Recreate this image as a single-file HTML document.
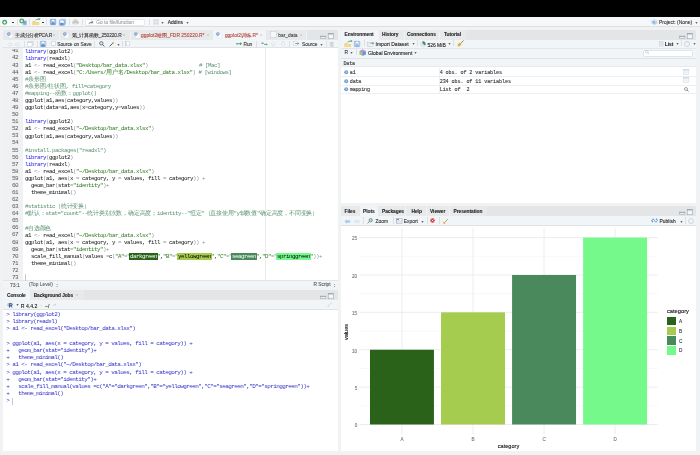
<!DOCTYPE html><html><head><meta charset="utf-8"><style>
*{box-sizing:border-box}
html,body{margin:0;padding:0}
body{width:700px;height:455px;overflow:hidden;position:relative;background:#f0f2f4;font-family:"Liberation Sans",sans-serif;color:#333}
.a{position:absolute}
.t{position:absolute;white-space:pre;line-height:1}
.mono{font-family:"Liberation Mono",monospace;-webkit-text-stroke:0}
.t{-webkit-text-stroke:0.1px currentColor}
.t.mono{-webkit-text-stroke:0}
i.w{font-style:normal;display:inline-block;width:5.8px;text-align:center;letter-spacing:0;font-size:6.3px}
.hl{padding:0 1px;margin:0 -1px}
.sep{position:absolute;width:0.6px;background:#dcdfe3}
.arr{position:absolute;width:0;height:0;border-left:1.3px solid transparent;border-right:1.3px solid transparent;border-top:1.5px solid #222}
svg{position:absolute;overflow:visible}
</style></head><body><div id="root" style="position:absolute;left:0;top:0;width:700px;height:455px;will-change:transform"><div class="a" style="left:0.00px;top:0.00px;width:700.00px;height:17.00px;background:#000"></div><div class="a" style="left:0.00px;top:17.00px;width:700.00px;height:9.60px;background:#f6f7f9;border-bottom:0.6px solid #dde0e3"></div><div class="a" style="left:3.40px;top:30.30px;width:334.40px;height:9.30px;background:#e3e5e7;border-radius:2px 2px 0 0"></div><div class="a" style="left:3.40px;top:30.30px;width:303.00px;height:9.30px;background:#e8e9eb;border-radius:2px 0 0 0"></div><div class="a" style="left:3.40px;top:39.60px;width:334.40px;height:8.20px;background:#f2f5f7;border-bottom:0.6px solid #e0e3e6"></div><div class="a" style="left:3.40px;top:47.80px;width:334.40px;height:232.50px;background:#fff"></div><div class="a" style="left:3.40px;top:47.80px;width:19.80px;height:232.50px;background:#f0f1f3"></div><div class="a" style="left:265.00px;top:47.80px;width:0.60px;height:232.50px;background:#ececec"></div><div class="a" style="left:3.40px;top:280.30px;width:334.40px;height:7.00px;background:#f2f5f7;border-top:0.6px solid #e3e6e9"></div><div class="a" style="left:3.40px;top:290.40px;width:334.40px;height:9.30px;background:#e3e5e7;border-radius:2px 2px 0 0"></div><div class="a" style="left:3.40px;top:290.40px;width:80.50px;height:9.30px;background:#e8e9eb;border-radius:2px 0 0 0"></div><div class="a" style="left:3.40px;top:299.70px;width:334.40px;height:9.90px;background:#f2f5f7;border-bottom:0.6px solid #e0e3e6"></div><div class="a" style="left:3.40px;top:309.60px;width:334.40px;height:141.40px;background:#fff"></div><div class="a" style="left:340.60px;top:30.40px;width:355.80px;height:9.20px;background:#e3e5e7;border-radius:2px 2px 0 0"></div><div class="a" style="left:340.60px;top:30.40px;width:125.50px;height:9.20px;background:#e8e9eb;border-radius:2px 0 0 0"></div><div class="a" style="left:340.60px;top:39.80px;width:355.80px;height:18.50px;background:#f2f5f7"></div><div class="a" style="left:340.60px;top:48.20px;width:355.80px;height:0.50px;background:#e3e6e9"></div><div class="a" style="left:340.60px;top:58.30px;width:355.80px;height:145.00px;background:#fff"></div><div class="a" style="left:340.60px;top:58.30px;width:355.80px;height:9.20px;background:#f2f5f7;border-top:0.6px solid #e0e3e6;border-bottom:0.5px solid #e8ebee"></div><div class="a" style="left:340.60px;top:205.90px;width:355.80px;height:9.80px;background:#e3e5e7;border-radius:2px 2px 0 0"></div><div class="a" style="left:340.60px;top:205.90px;width:146.40px;height:9.80px;background:#e8e9eb;border-radius:2px 0 0 0"></div><div class="a" style="left:340.60px;top:215.70px;width:355.80px;height:9.90px;background:#f2f5f7;border-bottom:0.6px solid #e0e3e6"></div><div class="a" style="left:340.60px;top:225.60px;width:355.80px;height:225.40px;background:#fff"></div><div class="a" style="left:3.4px;top:48.5px;width:334px;height:231.8px;overflow:hidden"><div class="t mono" style="left:0px;top:-0.09px;font-size:6.0px;letter-spacing:-0.45px;color:#5a5a5a;width:14.8px;text-align:right">41</div><div class="t mono" style="left:21.70px;top:0.11px;font-size:5.80px;letter-spacing:-0.48px;color:#111"><span style="color:#2020e8">library</span><span style="color:#8a96a5">(</span>ggplot2<span style="color:#8a96a5">)</span></div><div class="t mono" style="left:0px;top:6.99px;font-size:6.0px;letter-spacing:-0.45px;color:#5a5a5a;width:14.8px;text-align:right">42</div><div class="t mono" style="left:21.70px;top:7.19px;font-size:5.80px;letter-spacing:-0.48px;color:#111"><span style="color:#2020e8">library</span><span style="color:#8a96a5">(</span>readxl<span style="color:#8a96a5">)</span></div><div class="t mono" style="left:0px;top:14.07px;font-size:6.0px;letter-spacing:-0.45px;color:#5a5a5a;width:14.8px;text-align:right">43</div><div class="t mono" style="left:21.70px;top:14.27px;font-size:5.80px;letter-spacing:-0.48px;color:#111">a1 <span style="color:#8a96a5">&lt;-</span> read_excel<span style="color:#8a96a5">(</span><span style="color:#2d781d">"Desktop/bar_data.xlsx"</span><span style="color:#8a96a5">)</span>                 <span style="color:#5a9070"># [Mac]</span></div><div class="t mono" style="left:0px;top:21.15px;font-size:6.0px;letter-spacing:-0.45px;color:#5a5a5a;width:14.8px;text-align:right">44</div><div class="t mono" style="left:21.70px;top:21.35px;font-size:5.80px;letter-spacing:-0.48px;color:#111">a1 <span style="color:#8a96a5">&lt;-</span> read_excel<span style="color:#8a96a5">(</span><span style="color:#2d781d">"C:/Users/<i class="w">用</i><i class="w">户</i><i class="w">名</i>/Desktop/bar_data.xlsx"</span><span style="color:#8a96a5">)</span> <span style="color:#5a9070"># [windows]</span></div><div class="t mono" style="left:0px;top:28.23px;font-size:6.0px;letter-spacing:-0.45px;color:#5a5a5a;width:14.8px;text-align:right">45</div><div class="t mono" style="left:21.70px;top:28.43px;font-size:5.80px;letter-spacing:-0.48px;color:#111"><span style="color:#5a9070">#<i class="w">条</i><i class="w">形</i><i class="w">图</i></span></div><div class="t mono" style="left:0px;top:35.31px;font-size:6.0px;letter-spacing:-0.45px;color:#5a5a5a;width:14.8px;text-align:right">46</div><div class="t mono" style="left:21.70px;top:35.51px;font-size:5.80px;letter-spacing:-0.48px;color:#111"><span style="color:#5a9070">#<i class="w">条</i><i class="w">形</i><i class="w">图</i>/<i class="w">柱</i><i class="w">状</i><i class="w">图</i>, fill=category</span></div><div class="t mono" style="left:0px;top:42.39px;font-size:6.0px;letter-spacing:-0.45px;color:#5a5a5a;width:14.8px;text-align:right">47</div><div class="t mono" style="left:21.70px;top:42.59px;font-size:5.80px;letter-spacing:-0.48px;color:#111"><span style="color:#5a9070">#mapping--<i class="w">函</i><i class="w">数</i><i class="w">：</i>ggplot()</span></div><div class="t mono" style="left:0px;top:49.47px;font-size:6.0px;letter-spacing:-0.45px;color:#5a5a5a;width:14.8px;text-align:right">48</div><div class="t mono" style="left:21.70px;top:49.67px;font-size:5.80px;letter-spacing:-0.48px;color:#111">ggplot<span style="color:#8a96a5">(</span>a1,aes<span style="color:#8a96a5">(</span>category,values<span style="color:#8a96a5">)</span><span style="color:#8a96a5">)</span></div><div class="t mono" style="left:0px;top:56.55px;font-size:6.0px;letter-spacing:-0.45px;color:#5a5a5a;width:14.8px;text-align:right">49</div><div class="t mono" style="left:21.70px;top:56.75px;font-size:5.80px;letter-spacing:-0.48px;color:#111">ggplot<span style="color:#8a96a5">(</span>data<span style="color:#8a96a5">=</span>a1,aes<span style="color:#8a96a5">(</span>x<span style="color:#8a96a5">=</span>category,y<span style="color:#8a96a5">=</span>values<span style="color:#8a96a5">)</span><span style="color:#8a96a5">)</span></div><div class="t mono" style="left:0px;top:63.63px;font-size:6.0px;letter-spacing:-0.45px;color:#5a5a5a;width:14.8px;text-align:right">50</div><div class="t mono" style="left:21.70px;top:63.83px;font-size:5.80px;letter-spacing:-0.48px;color:#111"></div><div class="t mono" style="left:0px;top:70.71px;font-size:6.0px;letter-spacing:-0.45px;color:#5a5a5a;width:14.8px;text-align:right">51</div><div class="t mono" style="left:21.70px;top:70.91px;font-size:5.80px;letter-spacing:-0.48px;color:#111"><span style="color:#2020e8">library</span><span style="color:#8a96a5">(</span>ggplot2<span style="color:#8a96a5">)</span></div><div class="t mono" style="left:0px;top:77.79px;font-size:6.0px;letter-spacing:-0.45px;color:#5a5a5a;width:14.8px;text-align:right">52</div><div class="t mono" style="left:21.70px;top:77.99px;font-size:5.80px;letter-spacing:-0.48px;color:#111">a1 <span style="color:#8a96a5">&lt;-</span> read_excel<span style="color:#8a96a5">(</span><span style="color:#2d781d">"~/Desktop/bar_data.xlsx"</span><span style="color:#8a96a5">)</span></div><div class="t mono" style="left:0px;top:84.87px;font-size:6.0px;letter-spacing:-0.45px;color:#5a5a5a;width:14.8px;text-align:right">53</div><div class="t mono" style="left:21.70px;top:85.07px;font-size:5.80px;letter-spacing:-0.48px;color:#111">ggplot<span style="color:#8a96a5">(</span>a1,aes<span style="color:#8a96a5">(</span>category,values<span style="color:#8a96a5">)</span><span style="color:#8a96a5">)</span></div><div class="t mono" style="left:0px;top:91.95px;font-size:6.0px;letter-spacing:-0.45px;color:#5a5a5a;width:14.8px;text-align:right">54</div><div class="t mono" style="left:21.70px;top:92.15px;font-size:5.80px;letter-spacing:-0.48px;color:#111"></div><div class="t mono" style="left:0px;top:99.03px;font-size:6.0px;letter-spacing:-0.45px;color:#5a5a5a;width:14.8px;text-align:right">55</div><div class="t mono" style="left:21.70px;top:99.23px;font-size:5.80px;letter-spacing:-0.48px;color:#111"><span style="color:#5a9070">#install.packages("readxl")</span></div><div class="t mono" style="left:0px;top:106.11px;font-size:6.0px;letter-spacing:-0.45px;color:#5a5a5a;width:14.8px;text-align:right">56</div><div class="t mono" style="left:21.70px;top:106.31px;font-size:5.80px;letter-spacing:-0.48px;color:#111"><span style="color:#2020e8">library</span><span style="color:#8a96a5">(</span>ggplot2<span style="color:#8a96a5">)</span></div><div class="t mono" style="left:0px;top:113.19px;font-size:6.0px;letter-spacing:-0.45px;color:#5a5a5a;width:14.8px;text-align:right">57</div><div class="t mono" style="left:21.70px;top:113.39px;font-size:5.80px;letter-spacing:-0.48px;color:#111"><span style="color:#2020e8">library</span><span style="color:#8a96a5">(</span>readxl<span style="color:#8a96a5">)</span></div><div class="t mono" style="left:0px;top:120.27px;font-size:6.0px;letter-spacing:-0.45px;color:#5a5a5a;width:14.8px;text-align:right">58</div><div class="t mono" style="left:21.70px;top:120.47px;font-size:5.80px;letter-spacing:-0.48px;color:#111">a1 <span style="color:#8a96a5">&lt;-</span> read_excel<span style="color:#8a96a5">(</span><span style="color:#2d781d">"~/Desktop/bar_data.xlsx"</span><span style="color:#8a96a5">)</span></div><div class="t mono" style="left:0px;top:127.35px;font-size:6.0px;letter-spacing:-0.45px;color:#5a5a5a;width:14.8px;text-align:right">59</div><div class="t mono" style="left:21.70px;top:127.55px;font-size:5.80px;letter-spacing:-0.48px;color:#111">ggplot<span style="color:#8a96a5">(</span>a1, aes<span style="color:#8a96a5">(</span>x <span style="color:#8a96a5">=</span> category, y <span style="color:#8a96a5">=</span> values, fill <span style="color:#8a96a5">=</span> category<span style="color:#8a96a5">)</span><span style="color:#8a96a5">)</span> <span style="color:#8a96a5">+</span></div><div class="t mono" style="left:0px;top:134.43px;font-size:6.0px;letter-spacing:-0.45px;color:#5a5a5a;width:14.8px;text-align:right">60</div><div class="t mono" style="left:21.70px;top:134.63px;font-size:5.80px;letter-spacing:-0.48px;color:#111">  geom_bar<span style="color:#8a96a5">(</span>stat<span style="color:#8a96a5">=</span><span style="color:#2d781d">"identity"</span><span style="color:#8a96a5">)</span><span style="color:#8a96a5">+</span></div><div class="t mono" style="left:0px;top:141.51px;font-size:6.0px;letter-spacing:-0.45px;color:#5a5a5a;width:14.8px;text-align:right">61</div><div class="t mono" style="left:21.70px;top:141.71px;font-size:5.80px;letter-spacing:-0.48px;color:#111">  theme_minimal<span style="color:#8a96a5">(</span><span style="color:#8a96a5">)</span></div><div class="t mono" style="left:0px;top:148.59px;font-size:6.0px;letter-spacing:-0.45px;color:#5a5a5a;width:14.8px;text-align:right">62</div><div class="t mono" style="left:21.70px;top:148.79px;font-size:5.80px;letter-spacing:-0.48px;color:#111"></div><div class="t mono" style="left:0px;top:155.67px;font-size:6.0px;letter-spacing:-0.45px;color:#5a5a5a;width:14.8px;text-align:right">63</div><div class="t mono" style="left:21.70px;top:155.87px;font-size:5.80px;letter-spacing:-0.48px;color:#111"><span style="color:#5a9070">#statistic<i class="w">（</i><i class="w">统</i><i class="w">计</i><i class="w">变</i><i class="w">换</i><i class="w">）</i></span></div><div class="t mono" style="left:0px;top:162.75px;font-size:6.0px;letter-spacing:-0.45px;color:#5a5a5a;width:14.8px;text-align:right">64</div><div class="t mono" style="left:21.70px;top:162.95px;font-size:5.80px;letter-spacing:-0.48px;color:#111"><span style="color:#5a9070">#<i class="w">默</i><i class="w">认</i><i class="w">：</i>stat="count"--<i class="w">统</i><i class="w">计</i><i class="w">类</i><i class="w">别</i><i class="w">次</i><i class="w">数</i><i class="w">，</i><i class="w">确</i><i class="w">定</i><i class="w">高</i><i class="w">度</i><i class="w">；</i>identity--"<i class="w">恒</i><i class="w">定</i>"<i class="w">（</i><i class="w">直</i><i class="w">接</i><i class="w">使</i><i class="w">用</i>"y<i class="w">轴</i><i class="w">数</i><i class="w">值</i>"<i class="w">确</i><i class="w">定</i><i class="w">高</i><i class="w">度</i><i class="w">，</i><i class="w">不</i><i class="w">同</i><i class="w">变</i><i class="w">换</i><i class="w">）</i></span></div><div class="t mono" style="left:0px;top:169.83px;font-size:6.0px;letter-spacing:-0.45px;color:#5a5a5a;width:14.8px;text-align:right">65</div><div class="t mono" style="left:21.70px;top:170.03px;font-size:5.80px;letter-spacing:-0.48px;color:#111"></div><div class="t mono" style="left:0px;top:176.91px;font-size:6.0px;letter-spacing:-0.45px;color:#5a5a5a;width:14.8px;text-align:right">66</div><div class="t mono" style="left:21.70px;top:177.11px;font-size:5.80px;letter-spacing:-0.48px;color:#111"><span style="color:#5a9070">#<i class="w">自</i><i class="w">选</i><i class="w">颜</i><i class="w">色</i></span></div><div class="t mono" style="left:0px;top:183.99px;font-size:6.0px;letter-spacing:-0.45px;color:#5a5a5a;width:14.8px;text-align:right">67</div><div class="t mono" style="left:21.70px;top:184.19px;font-size:5.80px;letter-spacing:-0.48px;color:#111">a1 <span style="color:#8a96a5">&lt;-</span> read_excel<span style="color:#8a96a5">(</span><span style="color:#2d781d">"~/Desktop/bar_data.xlsx"</span><span style="color:#8a96a5">)</span></div><div class="t mono" style="left:0px;top:191.07px;font-size:6.0px;letter-spacing:-0.45px;color:#5a5a5a;width:14.8px;text-align:right">68</div><div class="t mono" style="left:21.70px;top:191.27px;font-size:5.80px;letter-spacing:-0.48px;color:#111">ggplot<span style="color:#8a96a5">(</span>a1, aes<span style="color:#8a96a5">(</span>x <span style="color:#8a96a5">=</span> category, y <span style="color:#8a96a5">=</span> values, fill <span style="color:#8a96a5">=</span> category<span style="color:#8a96a5">)</span><span style="color:#8a96a5">)</span> <span style="color:#8a96a5">+</span></div><div class="t mono" style="left:0px;top:198.15px;font-size:6.0px;letter-spacing:-0.45px;color:#5a5a5a;width:14.8px;text-align:right">69</div><div class="t mono" style="left:21.70px;top:198.35px;font-size:5.80px;letter-spacing:-0.48px;color:#111">  geom_bar<span style="color:#8a96a5">(</span>stat<span style="color:#8a96a5">=</span><span style="color:#2d781d">"identity"</span><span style="color:#8a96a5">)</span><span style="color:#8a96a5">+</span></div><div class="t mono" style="left:0px;top:205.23px;font-size:6.0px;letter-spacing:-0.45px;color:#5a5a5a;width:14.8px;text-align:right">70</div><div class="t mono" style="left:21.70px;top:205.43px;font-size:5.80px;letter-spacing:-0.48px;color:#111">  scale_fill_manual<span style="color:#8a96a5">(</span>values <span style="color:#8a96a5">=</span>c<span style="color:#8a96a5">(</span><span style="color:#2d781d">"A"</span><span style="color:#8a96a5">=</span><span style="color:#2d781d">&quot;</span><span class="hl" style="background:#296218;color:#fff">darkgreen</span><span style="color:#2d781d">&quot;</span>,<span style="color:#2d781d">"B"</span><span style="color:#8a96a5">=</span><span style="color:#2d781d">&quot;</span><span class="hl" style="background:#a5cc4f;color:#000">yellowgreen</span><span style="color:#2d781d">&quot;</span>,<span style="color:#2d781d">"C"</span><span style="color:#8a96a5">=</span><span style="color:#2d781d">&quot;</span><span class="hl" style="background:#4a895c;color:#fff">seagreen</span><span style="color:#2d781d">&quot;</span>,<span style="color:#2d781d">"D"</span><span style="color:#8a96a5">=</span><span style="color:#2d781d">&quot;</span><span class="hl" style="background:#75fb8d;color:#000">springgreen</span><span style="color:#2d781d">&quot;</span><span style="color:#8a96a5">)</span><span style="color:#8a96a5">)</span><span style="color:#8a96a5">+</span></div><div class="t mono" style="left:0px;top:212.31px;font-size:6.0px;letter-spacing:-0.45px;color:#5a5a5a;width:14.8px;text-align:right">71</div><div class="t mono" style="left:21.70px;top:212.51px;font-size:5.80px;letter-spacing:-0.48px;color:#111">  theme_minimal<span style="color:#8a96a5">(</span><span style="color:#8a96a5">)</span></div><div class="t mono" style="left:0px;top:219.39px;font-size:6.0px;letter-spacing:-0.45px;color:#5a5a5a;width:14.8px;text-align:right">72</div><div class="t mono" style="left:21.70px;top:219.59px;font-size:5.80px;letter-spacing:-0.48px;color:#111"></div><div class="t mono" style="left:0px;top:226.47px;font-size:6.0px;letter-spacing:-0.45px;color:#5a5a5a;width:14.8px;text-align:right">73</div><div class="t mono" style="left:21.70px;top:226.67px;font-size:5.80px;letter-spacing:-0.48px;color:#111"></div></div><div class="a" style="left:25.30px;top:274.00px;width:0.50px;height:6.50px;background:#c8c8c8"></div><svg style="left:0;top:0" width="700" height="455" viewBox="0 0 700 455"><line x1="359.30" y1="405.81" x2="657.70" y2="405.81" stroke="#f3f3f3" stroke-width="0.7"/><line x1="359.30" y1="368.43" x2="657.70" y2="368.43" stroke="#f3f3f3" stroke-width="0.7"/><line x1="359.30" y1="331.05" x2="657.70" y2="331.05" stroke="#f3f3f3" stroke-width="0.7"/><line x1="359.30" y1="293.67" x2="657.70" y2="293.67" stroke="#f3f3f3" stroke-width="0.7"/><line x1="359.30" y1="256.29" x2="657.70" y2="256.29" stroke="#f3f3f3" stroke-width="0.7"/><line x1="359.30" y1="424.50" x2="657.70" y2="424.50" stroke="#ebebeb" stroke-width="0.9"/><line x1="359.30" y1="387.12" x2="657.70" y2="387.12" stroke="#ebebeb" stroke-width="0.9"/><line x1="359.30" y1="349.74" x2="657.70" y2="349.74" stroke="#ebebeb" stroke-width="0.9"/><line x1="359.30" y1="312.36" x2="657.70" y2="312.36" stroke="#ebebeb" stroke-width="0.9"/><line x1="359.30" y1="274.98" x2="657.70" y2="274.98" stroke="#ebebeb" stroke-width="0.9"/><line x1="359.30" y1="237.60" x2="657.70" y2="237.60" stroke="#ebebeb" stroke-width="0.9"/><line x1="401.95" y1="228.25" x2="401.95" y2="433.85" stroke="#ebebeb" stroke-width="0.9"/><line x1="473.00" y1="228.25" x2="473.00" y2="433.85" stroke="#ebebeb" stroke-width="0.9"/><line x1="544.05" y1="228.25" x2="544.05" y2="433.85" stroke="#ebebeb" stroke-width="0.9"/><line x1="615.10" y1="228.25" x2="615.10" y2="433.85" stroke="#ebebeb" stroke-width="0.9"/><rect x="369.98" y="349.74" width="63.95" height="74.76" fill="#296218"/><rect x="441.03" y="312.36" width="63.95" height="112.14" fill="#a5cc4f"/><rect x="512.08" y="274.98" width="63.95" height="149.52" fill="#4a895c"/><rect x="583.13" y="237.60" width="63.95" height="186.90" fill="#75f98b"/></svg><div class="t" style="left:340px;width:17.2px;text-align:right;top:424.30px;font-size:4.6px;color:#777">0</div><div class="t" style="left:340px;width:17.2px;text-align:right;top:386.92px;font-size:4.6px;color:#777">5</div><div class="t" style="left:340px;width:17.2px;text-align:right;top:349.54px;font-size:4.6px;color:#777">10</div><div class="t" style="left:340px;width:17.2px;text-align:right;top:312.16px;font-size:4.6px;color:#777">15</div><div class="t" style="left:340px;width:17.2px;text-align:right;top:274.78px;font-size:4.6px;color:#777">20</div><div class="t" style="left:340px;width:17.2px;text-align:right;top:237.40px;font-size:4.6px;color:#777">25</div><div class="t" style="left:396.95px;width:10px;text-align:center;top:438.00px;font-size:4.6px;color:#777">A</div><div class="t" style="left:468.00px;width:10px;text-align:center;top:438.00px;font-size:4.6px;color:#777">B</div><div class="t" style="left:539.05px;width:10px;text-align:center;top:438.00px;font-size:4.6px;color:#777">C</div><div class="t" style="left:610.10px;width:10px;text-align:center;top:438.00px;font-size:4.6px;color:#777">D</div><div class="t" style="left:488.50px;width:40px;text-align:center;top:443.90px;font-size:5.6px;color:#111">category</div><div class="t" style="left:332.00px;top:328.50px;width:30px;text-align:center;font-size:5.6px;color:#111;transform:rotate(-90deg);transform-origin:15px 3px">values</div><div class="t" style="left:666.9px;top:309.1px;font-size:5.75px;color:#111">category</div><div class="a" style="left:667.20px;top:316.90px;width:8.80px;height:8.60px;background:#296218"></div><div class="t" style="left:679px;top:320.20px;font-size:4.7px;color:#333">A</div><div class="a" style="left:667.20px;top:326.57px;width:8.80px;height:8.60px;background:#a5cc4f"></div><div class="t" style="left:679px;top:329.87px;font-size:4.7px;color:#333">B</div><div class="a" style="left:667.20px;top:336.24px;width:8.80px;height:8.60px;background:#4a895c"></div><div class="t" style="left:679px;top:339.54px;font-size:4.7px;color:#333">C</div><div class="a" style="left:667.20px;top:345.91px;width:8.80px;height:8.60px;background:#75f98b"></div><div class="t" style="left:679px;top:349.21px;font-size:4.7px;color:#333">D</div><svg style="left:2.00px;top:18.50px" width="8.00" height="7.00" viewBox="0 0 8.00 7.00"><rect x="3.2" y="1.4" width="4.2" height="5.2" fill="#fff"/><circle cx="2.7" cy="3.3" r="2.45" fill="#3f9f5c"/><path d="M2.7 1.9V4.7M1.3 3.3H4.1" stroke="#fff" stroke-width="0.95"/></svg><div class="a" style="left:12.40px;top:21.90px;width:1.70px;height:1.10px;background:#222;border-radius:0.5px"></div><div class="sep" style="left:16.50px;top:18.80px;height:6.20px"></div><svg style="left:18.50px;top:18.20px" width="9.00" height="8.00" viewBox="0 0 9.00 8.00"><rect x="3.4" y="2.2" width="4.6" height="5.2" rx="0.5" fill="#c3d9f0"/><rect x="4.3" y="3.0" width="3" height="3.6" fill="#7fa8da"/><circle cx="2.8" cy="3" r="2.45" fill="#3f9f5c"/><path d="M2.8 1.6V4.4M1.4 3H4.2" stroke="#fff" stroke-width="0.95"/></svg><div class="sep" style="left:29.30px;top:18.80px;height:6.20px"></div><svg style="left:31.50px;top:18.00px" width="9.50" height="7.00" viewBox="0 0 9.50 7.00"><path d="M0.5 3.2h2.6l0.6 0.7h3.4v2.8h-6.6z" fill="#e9c76a"/><path d="M0.4 4.3h6.8l-0.9 2.5h-5.9z" fill="#f3da8c"/><path d="M3.6 2.3c0.8-1 2-1.2 3.6-1.2" stroke="#3aa65a" stroke-width="0.9" fill="none"/><path d="M6.8 0l1.8 1.1-1.8 1.1z" fill="#3aa65a"/></svg><div class="a" style="left:42.00px;top:21.90px;width:1.70px;height:1.10px;background:#222;border-radius:0.5px"></div><div class="sep" style="left:46.40px;top:18.80px;height:6.20px"></div><svg style="left:49.80px;top:19.40px" width="6.20" height="6.00" viewBox="0 0 6.20 6.00"><rect x="0.35" y="0.35" width="5.4" height="5.3" rx="0.5" fill="#d7e5f4" stroke="#5d8fd0" stroke-width="0.7"/><rect x="1.6" y="0.4" width="2.9" height="1.9" fill="#fff" stroke="#5d8fd0" stroke-width="0.4"/><rect x="1.3" y="3.3" width="3.5" height="2.3" fill="#5d8fd0"/></svg><svg style="left:59.40px;top:19.00px" width="7.00" height="6.60" viewBox="0 0 7.00 6.60"><rect x="1.4" y="0.3" width="5.2" height="5" rx="0.5" fill="#cfe0f2" stroke="#7aa3d6" stroke-width="0.5"/><rect x="0.35" y="1.3" width="5.2" height="5" rx="0.5" fill="#d7e5f4" stroke="#5d8fd0" stroke-width="0.6"/><rect x="1.5" y="1.4" width="2.8" height="1.7" fill="#fff"/><rect x="1.2" y="4" width="3.4" height="2.1" fill="#5d8fd0"/></svg><div class="sep" style="left:68.60px;top:18.80px;height:6.20px"></div><svg style="left:72.30px;top:19.20px" width="7.00" height="6.00" viewBox="0 0 7.00 6.00"><rect x="1.6" y="0.2" width="3.8" height="2.2" fill="#ecd58f"/><rect x="0.3" y="2" width="6.4" height="3.2" rx="0.9" fill="#c3c9d2"/><rect x="1.4" y="4.3" width="4.2" height="1.2" fill="#e4e8ec"/></svg><div class="sep" style="left:82.00px;top:18.80px;height:6.20px"></div><div class="a" style="left:84.80px;top:19.00px;width:60.50px;height:6.90px;background:#fff;border:0.5px solid #e6e9ec;border-radius:1.2px"></div><svg style="left:87.50px;top:19.80px" width="5.80" height="5.00" viewBox="0 0 5.80 5.00"><path d="M0.4 4.6 C0.9 2.4 2.1 1.7 3.6 1.7 V0.3 L5.5 2.3 L3.6 4.3 V2.9 C2.3 2.9 1.2 3.4 0.4 4.6z" fill="#7f8a99"/></svg><div class="t" style="left:96.30px;top:21.23px;font-size:4.85px;color:#a0a0a0;font-weight:normal;">Go to file/function</div><div class="sep" style="left:149.00px;top:18.50px;height:6.50px"></div><svg style="left:153.00px;top:18.90px" width="6.00" height="6.00" viewBox="0 0 6.00 6.00"><rect x="0.3" y="0.3" width="2.4" height="2.4" fill="#d5d9de"/><rect x="3.3" y="0.3" width="2.4" height="2.4" fill="#d5d9de"/><rect x="0.3" y="3.3" width="2.4" height="2.4" fill="#d5d9de"/><rect x="3.3" y="3.3" width="2.4" height="2.4" fill="#d5d9de"/></svg><svg style="left:160.90px;top:21.80px" width="3" height="2" viewBox="0 0 3 2"><path d="M0.4 0.3H2.6L1.5 1.7z" fill="#333"/></svg><div class="t" style="left:167.80px;top:21.01px;font-size:4.95px;color:#222;font-weight:normal;">Addins</div><svg style="left:186.40px;top:21.80px" width="3" height="2" viewBox="0 0 3 2"><path d="M0.4 0.3H2.6L1.5 1.7z" fill="#333"/></svg><svg style="left:651.00px;top:19.20px" width="6.60" height="6.00" viewBox="0 0 6.60 6.00"><path d="M3.3 0.2L6.3 1.6V4.6L3.3 5.9 0.3 4.6V1.6z" fill="#bcd7ef"/><path d="M3.3 0.2L6.3 1.6 3.3 3 0.3 1.6z" fill="#d8e9f7"/><path d="M2.6 1.8v2.6M2.6 3.1l1.4-1.2M2.9 2.9l1.2 1.5" stroke="#4f86cc" stroke-width="0.5"/></svg><div class="t" style="left:659.00px;top:21.01px;font-size:4.95px;color:#333;font-weight:normal;">Project: (None)</div><svg style="left:694.50px;top:21.80px" width="3" height="2" viewBox="0 0 3 2"><path d="M0.4 0.3H2.6L1.5 1.7z" fill="#333"/></svg><div class="a" style="left:213.20px;top:30.30px;width:52.60px;height:9.50px;background:#f2f5f7"></div><svg style="left:7.00px;top:31.90px" width="6.00" height="6.50" viewBox="0 0 6.00 6.50"><path d="M1.6 1.0h2.6l1.5 1.5v3.6H1.6z" fill="#fff" stroke="#d0d4d9" stroke-width="0.35"/><circle cx="1.9" cy="1.9" r="1.75" fill="#6f8fc6"/><path d="M1.4 2.8V1.1h0.8a0.5 0.5 0 0 1 0 1h-0.8M2 2.1l0.7 0.7" stroke="#fff" stroke-width="0.35" fill="none"/></svg><div class="t" style="left:15.20px;top:34.03px;font-size:4.85px;color:#333;font-weight:normal;letter-spacing:-0.30px;">主成分分析PCA.R</div><svg style="left:53.20px;top:34.20px" width="2.00" height="2.00" viewBox="0 0 2.00 2.00"><path d="M0.2 0.2L1.8 1.8M1.8 0.2L0.2 1.8" stroke="#aaa" stroke-width="0.45"/></svg><svg style="left:63.00px;top:31.90px" width="6.00" height="6.50" viewBox="0 0 6.00 6.50"><path d="M1.6 1.0h2.6l1.5 1.5v3.6H1.6z" fill="#fff" stroke="#d0d4d9" stroke-width="0.35"/><circle cx="1.9" cy="1.9" r="1.75" fill="#6f8fc6"/><path d="M1.4 2.8V1.1h0.8a0.5 0.5 0 0 1 0 1h-0.8M2 2.1l0.7 0.7" stroke="#fff" stroke-width="0.35" fill="none"/></svg><div class="t" style="left:71.70px;top:34.03px;font-size:4.85px;color:#333;font-weight:normal;letter-spacing:-0.10px;">第_计算函数_250220.R</div><svg style="left:123.20px;top:34.20px" width="2.00" height="2.00" viewBox="0 0 2.00 2.00"><path d="M0.2 0.2L1.8 1.8M1.8 0.2L0.2 1.8" stroke="#aaa" stroke-width="0.45"/></svg><svg style="left:133.50px;top:31.90px" width="6.00" height="6.50" viewBox="0 0 6.00 6.50"><path d="M1.6 1.0h2.6l1.5 1.5v3.6H1.6z" fill="#fff" stroke="#d0d4d9" stroke-width="0.35"/><circle cx="1.9" cy="1.9" r="1.75" fill="#6f8fc6"/><path d="M1.4 2.8V1.1h0.8a0.5 0.5 0 0 1 0 1h-0.8M2 2.1l0.7 0.7" stroke="#fff" stroke-width="0.35" fill="none"/></svg><div class="t" style="left:141.00px;top:34.03px;font-size:4.85px;color:#b0463a;font-weight:normal;letter-spacing:0.03px;">ggplot2绘图_FDR 250220.R*</div><svg style="left:206.80px;top:34.20px" width="2.00" height="2.00" viewBox="0 0 2.00 2.00"><path d="M0.2 0.2L1.8 1.8M1.8 0.2L0.2 1.8" stroke="#aaa" stroke-width="0.45"/></svg><svg style="left:216.20px;top:31.90px" width="6.00" height="6.50" viewBox="0 0 6.00 6.50"><path d="M1.6 1.0h2.6l1.5 1.5v3.6H1.6z" fill="#fff" stroke="#d0d4d9" stroke-width="0.35"/><circle cx="1.9" cy="1.9" r="1.75" fill="#6f8fc6"/><path d="M1.4 2.8V1.1h0.8a0.5 0.5 0 0 1 0 1h-0.8M2 2.1l0.7 0.7" stroke="#fff" stroke-width="0.35" fill="none"/></svg><div class="t" style="left:224.90px;top:34.03px;font-size:4.85px;color:#b0463a;font-weight:normal;letter-spacing:0.03px;">ggplot2训练.R*</div><svg style="left:260.00px;top:34.20px" width="2.00" height="2.00" viewBox="0 0 2.00 2.00"><path d="M0.2 0.2L1.8 1.8M1.8 0.2L0.2 1.8" stroke="#aaa" stroke-width="0.45"/></svg><div class="a" style="left:59.00px;top:30.80px;width:0.60px;height:8.80px;background:#f1f2f4"></div><div class="a" style="left:129.80px;top:30.80px;width:0.60px;height:8.80px;background:#f1f2f4"></div><svg style="left:270.30px;top:31.20px" width="6.60" height="6.60" viewBox="0 0 6.60 6.60"><rect x="0.3" y="0.3" width="6" height="6" fill="#f7f8fa" stroke="#c2c8cf" stroke-width="0.5"/></svg><div class="a" style="left:306.30px;top:30.80px;width:0.60px;height:8.80px;background:#f1f2f4"></div><div class="t" style="left:278.30px;top:34.03px;font-size:4.85px;color:#444;font-weight:normal;">bar_data</div><svg style="left:299.80px;top:34.20px" width="2.00" height="2.00" viewBox="0 0 2.00 2.00"><path d="M0.2 0.2L1.8 1.8M1.8 0.2L0.2 1.8" stroke="#aaa" stroke-width="0.45"/></svg><svg style="left:320.10px;top:33.20px" width="14.00" height="7.00" viewBox="0 0 14.00 7.00"><rect x="0.3" y="3.1" width="5.6" height="2.1" fill="#f4f5f7" stroke="#9aa0a7" stroke-width="0.55"/><rect x="0.3" y="3.1" width="5.6" height="0.7" fill="#9aa0a7"/><rect x="8.2" y="0.3" width="5.2" height="5.5" fill="#f4f5f7" stroke="#9aa0a7" stroke-width="0.55"/><rect x="8.2" y="0.3" width="5.2" height="1.1" fill="#9aa0a7"/></svg><svg style="left:7.00px;top:41.50px" width="14.00" height="5.00" viewBox="0 0 14.00 5.00"><path d="M0.5 2.5L2.5 0.6V1.6H5V3.4H2.5V4.4z" fill="#f4f6f8" stroke="#c9ced4" stroke-width="0.4"/><path d="M13 2.5L11 0.6V1.6H8.5V3.4H11V4.4z" fill="#f4f6f8" stroke="#c9ced4" stroke-width="0.4"/></svg><div class="sep" style="left:23.50px;top:40.80px;height:6.00px"></div><svg style="left:26.80px;top:41.20px" width="6.50" height="5.50" viewBox="0 0 6.50 5.50"><rect x="1.5" y="0.4" width="4.6" height="3.8" fill="#e8ecf0" stroke="#b7bec7" stroke-width="0.4"/><rect x="0.4" y="1.6" width="4.6" height="3.6" fill="#fff" stroke="#b7bec7" stroke-width="0.4"/></svg><div class="sep" style="left:36.50px;top:40.80px;height:6.00px"></div><svg style="left:40.20px;top:41.00px" width="6.20" height="6.00" viewBox="0 0 6.20 6.00"><rect x="0.35" y="0.35" width="5.4" height="5.3" rx="0.5" fill="#e3edf8" stroke="#6f9bd6" stroke-width="0.6"/><rect x="1.6" y="0.4" width="2.9" height="1.9" fill="#fff" stroke="#6f9bd6" stroke-width="0.35"/><rect x="1.3" y="3.3" width="3.5" height="2.3" fill="#4f86cc"/></svg><svg style="left:50.80px;top:41.30px" width="5.00" height="5.00" viewBox="0 0 5.00 5.00"><rect x="0.3" y="0.3" width="4.3" height="4.3" rx="0.6" fill="#fff" stroke="#a9aeb5" stroke-width="0.45"/></svg><div class="t" style="left:57.20px;top:42.93px;font-size:4.85px;color:#333;font-weight:normal;">Source on Save</div><div class="sep" style="left:93.50px;top:40.80px;height:6.00px"></div><svg style="left:98.50px;top:41.00px" width="6.00" height="6.00" viewBox="0 0 6.00 6.00"><circle cx="2.3" cy="2.3" r="1.7" fill="#dbe7f3" stroke="#3a5068" stroke-width="0.7"/><path d="M3.5 3.5L5.4 5.4" stroke="#3a5068" stroke-width="0.9"/></svg><svg style="left:108.50px;top:40.90px" width="6.00" height="6.00" viewBox="0 0 6.00 6.00"><path d="M0.6 5.4L4 2" stroke="#44525f" stroke-width="0.9"/><path d="M4.2 0.5l0.4 0.9 0.9 0.2-0.7 0.6 0.2 0.9-0.8-0.5-0.8 0.5 0.2-0.9-0.7-0.6 0.9-0.2z" fill="#f0a23c"/></svg><svg style="left:116.90px;top:43.80px" width="3" height="2" viewBox="0 0 3 2"><path d="M0.4 0.3H2.6L1.5 1.7z" fill="#333"/></svg><div class="sep" style="left:121.50px;top:40.80px;height:6.00px"></div><svg style="left:124.50px;top:41.30px" width="5.00" height="5.00" viewBox="0 0 5.00 5.00"><rect x="0.4" y="0.4" width="4" height="4.4" fill="#fff" stroke="#b8bec5" stroke-width="0.4"/><rect x="0.4" y="0.4" width="1.2" height="4.4" fill="#c9ced4"/></svg><svg style="left:236.00px;top:42.30px" width="6.50" height="3.50" viewBox="0 0 6.50 3.50"><path d="M0.3 1.75H4.4" stroke="#3ea05a" stroke-width="0.9"/><path d="M4 0.2L6.2 1.75 4 3.3z" fill="#3ea05a"/><path d="M0.3 1.75H2" stroke="#6f8fc6" stroke-width="0.9"/></svg><div class="t" style="left:243.40px;top:42.93px;font-size:4.85px;color:#333;font-weight:normal;">Run</div><div class="sep" style="left:256.40px;top:40.80px;height:6.00px"></div><svg style="left:261.00px;top:42.00px" width="7.00" height="4.00" viewBox="0 0 7.00 4.00"><path d="M0.5 1.2h2.4" stroke="#6f8fc6" stroke-width="0.9"/><path d="M0.3 1.2L1.6 0.2V2.2z" fill="#6f8fc6"/><path d="M3.2 2.4h2.4" stroke="#3ea05a" stroke-width="0.9"/><path d="M5.3 1.3L6.7 2.4 5.3 3.5z" fill="#3ea05a"/></svg><svg style="left:271.00px;top:41.20px" width="4.50" height="5.50" viewBox="0 0 4.50 5.50"><path d="M2.2 0.4L4.2 2.6H3V5H1.4V2.6H0.2z" fill="#fff" stroke="#c6ccd3" stroke-width="0.45"/></svg><svg style="left:281.00px;top:41.20px" width="4.50" height="5.50" viewBox="0 0 4.50 5.50"><path d="M2.2 5.1L4.2 2.9H3V0.5H1.4V2.9H0.2z" fill="#fff" stroke="#c6ccd3" stroke-width="0.45"/></svg><div class="sep" style="left:289.00px;top:40.80px;height:6.00px"></div><svg style="left:293.30px;top:41.30px" width="7.00" height="5.00" viewBox="0 0 7.00 5.00"><rect x="0.3" y="0.5" width="4.2" height="4.2" fill="#fff" stroke="#b7bec7" stroke-width="0.4"/><path d="M2 2.6h3" stroke="#6f8fc6" stroke-width="0.9"/><path d="M4.6 1.4l1.8 1.2-1.8 1.2z" fill="#6f8fc6"/></svg><div class="t" style="left:302.00px;top:42.93px;font-size:4.85px;color:#333;font-weight:normal;">Source</div><svg style="left:320.30px;top:43.80px" width="3" height="2" viewBox="0 0 3 2"><path d="M0.4 0.3H2.6L1.5 1.7z" fill="#333"/></svg><div class="sep" style="left:325.50px;top:40.80px;height:6.00px"></div><svg style="left:328.50px;top:41.50px" width="5.00" height="4.50" viewBox="0 0 5.00 4.50"><path d="M0.5 0.6h4M1.5 1.8h3M0.5 3h4M1.5 4.2h3" stroke="#9aa2ab" stroke-width="0.5"/></svg><div class="t" style="left:10.00px;top:283.28px;font-size:5.10px;color:#555;font-weight:normal;">73:1</div><div class="t" style="left:29.00px;top:283.33px;font-size:4.85px;color:#666;font-weight:normal;">(Top Level)</div><div class="t" style="left:56.30px;top:283.06px;font-size:5.20px;color:#666;font-weight:bold;">:</div><div class="t" style="left:313.50px;top:283.34px;font-size:4.80px;color:#555;font-weight:normal;">R Script</div><div class="t" style="left:333.40px;top:283.06px;font-size:5.20px;color:#666;font-weight:bold;">:</div><div class="a" style="left:3.40px;top:290.40px;width:26.50px;height:9.30px;background:#f2f5f7;border-radius:2px 2px 0 0"></div><div class="t" style="left:7.00px;top:294.23px;font-size:4.85px;color:#222;font-weight:bold;letter-spacing:-0.05px;">Console</div><div class="t" style="left:33.70px;top:294.25px;font-size:4.75px;color:#222;font-weight:bold;letter-spacing:-0.05px;">Background Jobs</div><svg style="left:76.00px;top:294.40px" width="2.00" height="2.00" viewBox="0 0 2.00 2.00"><path d="M0.2 0.2L1.8 1.8M1.8 0.2L0.2 1.8" stroke="#aaa" stroke-width="0.45"/></svg><svg style="left:320.10px;top:293.20px" width="14.00" height="7.00" viewBox="0 0 14.00 7.00"><rect x="0.3" y="3.1" width="5.6" height="2.1" fill="#f4f5f7" stroke="#9aa0a7" stroke-width="0.55"/><rect x="0.3" y="3.1" width="5.6" height="0.7" fill="#9aa0a7"/><rect x="8.2" y="0.3" width="5.2" height="5.5" fill="#f4f5f7" stroke="#9aa0a7" stroke-width="0.55"/><rect x="8.2" y="0.3" width="5.2" height="1.1" fill="#9aa0a7"/></svg><svg style="left:7.30px;top:302.20px" width="6.50" height="6.00" viewBox="0 0 6.50 6.00"><ellipse cx="3" cy="2.8" rx="2.8" ry="2.1" fill="#b5bcc5"/><path d="M2.5 5.6V1.6h1.6a1 1 0 0 1 0 2H2.5M3.8 3.6L5 5.6" stroke="#2f5fa8" stroke-width="0.9" fill="none"/></svg><svg style="left:16.40px;top:304.40px" width="3" height="2" viewBox="0 0 3 2"><path d="M0.4 0.3H2.6L1.5 1.7z" fill="#333"/></svg><div class="t" style="left:20.80px;top:304.27px;font-size:5.15px;color:#1a1a1a;font-weight:normal;">R 4.4.2</div><div class="t" style="left:40.20px;top:304.33px;font-size:4.85px;color:#777;font-weight:normal;">·</div><div class="t" style="left:45.00px;top:304.30px;font-size:5.00px;color:#1a1a1a;font-weight:normal;">~/</div><svg style="left:52.00px;top:302.80px" width="4.50" height="4.00" viewBox="0 0 4.50 4.00"><path d="M0.5 3.5C0.8 1.8 1.8 1.3 3 1.3V0.3L4.3 1.8 3 3.3V2.3C2 2.3 1.1 2.6 0.5 3.5z" fill="#d0d4d9"/></svg><svg style="left:327.00px;top:302.00px" width="6.00" height="5.00" viewBox="0 0 6.00 5.00"><path d="M0.5 4.5L4.8 0.5" stroke="#c9ced4" stroke-width="0.7"/><path d="M0.3 4.8L1.6 3.4 2.4 4.2z" fill="#c9ced4"/></svg><div class="t mono" style="left:6.2px;top:312.04px;font-size:6.00px;letter-spacing:-0.60px;color:#3030cc">&gt; library(ggplot2)</div><div class="t mono" style="left:6.2px;top:319.24px;font-size:6.00px;letter-spacing:-0.60px;color:#3030cc">&gt; library(readxl)</div><div class="t mono" style="left:6.2px;top:326.44px;font-size:6.00px;letter-spacing:-0.60px;color:#3030cc">&gt; a1 &lt;- read_excel("Desktop/bar_data.xlsx")</div><div class="t mono" style="left:6.2px;top:333.64px;font-size:6.00px;letter-spacing:-0.60px;color:#3030cc"></div><div class="t mono" style="left:6.2px;top:340.84px;font-size:6.00px;letter-spacing:-0.60px;color:#3030cc">&gt; ggplot(a1, aes(x = category, y = values, fill = category)) +</div><div class="t mono" style="left:6.2px;top:348.04px;font-size:6.00px;letter-spacing:-0.60px;color:#3030cc">+   geom_bar(stat="identity")+</div><div class="t mono" style="left:6.2px;top:355.24px;font-size:6.00px;letter-spacing:-0.60px;color:#3030cc">+   theme_minimal()</div><div class="t mono" style="left:6.2px;top:362.44px;font-size:6.00px;letter-spacing:-0.60px;color:#3030cc">&gt; a1 &lt;- read_excel("~/Desktop/bar_data.xlsx")</div><div class="t mono" style="left:6.2px;top:369.64px;font-size:6.00px;letter-spacing:-0.60px;color:#3030cc">&gt; ggplot(a1, aes(x = category, y = values, fill = category)) +</div><div class="t mono" style="left:6.2px;top:376.84px;font-size:6.00px;letter-spacing:-0.60px;color:#3030cc">+   geom_bar(stat="identity")+</div><div class="t mono" style="left:6.2px;top:384.04px;font-size:6.00px;letter-spacing:-0.60px;color:#3030cc">+   scale_fill_manual(values =c("A"="darkgreen","B"="yellowgreen","C"="seagreen","D"="springgreen"))+</div><div class="t mono" style="left:6.2px;top:391.24px;font-size:6.00px;letter-spacing:-0.60px;color:#3030cc">+   theme_minimal()</div><div class="t mono" style="left:6.2px;top:398.44px;font-size:6.00px;letter-spacing:-0.60px;color:#3030cc">&gt; </div><div class="a" style="left:11.70px;top:398.30px;width:0.50px;height:6.50px;background:#c8c8c8"></div><div class="a" style="left:340.60px;top:30.40px;width:38.00px;height:9.40px;background:#f2f5f7;border-radius:2px 2px 0 0"></div><div class="a" style="left:403.80px;top:30.90px;width:0.60px;height:8.70px;background:#f1f2f4"></div><div class="a" style="left:439.30px;top:30.90px;width:0.60px;height:8.70px;background:#f1f2f4"></div><div class="t" style="left:344.60px;top:33.13px;font-size:4.85px;color:#222;font-weight:bold;letter-spacing:-0.05px;">Environment</div><div class="t" style="left:382.00px;top:33.13px;font-size:4.85px;color:#222;font-weight:bold;letter-spacing:-0.05px;">History</div><div class="t" style="left:407.00px;top:33.13px;font-size:4.85px;color:#222;font-weight:bold;letter-spacing:-0.05px;">Connections</div><div class="t" style="left:444.00px;top:33.13px;font-size:4.85px;color:#222;font-weight:bold;letter-spacing:-0.05px;">Tutorial</div><svg style="left:679.00px;top:32.80px" width="14.00" height="7.00" viewBox="0 0 14.00 7.00"><rect x="0.3" y="3.1" width="5.6" height="2.1" fill="#f4f5f7" stroke="#9aa0a7" stroke-width="0.55"/><rect x="0.3" y="3.1" width="5.6" height="0.7" fill="#9aa0a7"/><rect x="8.2" y="0.3" width="5.2" height="5.5" fill="#f4f5f7" stroke="#9aa0a7" stroke-width="0.55"/><rect x="8.2" y="0.3" width="5.2" height="1.1" fill="#9aa0a7"/></svg><svg style="left:343.60px;top:40.00px" width="9.50" height="7.00" viewBox="0 0 9.50 7.00"><path d="M0.5 3.2h2.6l0.6 0.7h3.4v2.8h-6.6z" fill="#e9c76a"/><path d="M0.4 4.3h6.8l-0.9 2.5h-5.9z" fill="#f3da8c"/><path d="M3.6 2.3c0.8-1 2-1.2 3.6-1.2" stroke="#3aa65a" stroke-width="0.9" fill="none"/><path d="M6.8 0l1.8 1.1-1.8 1.1z" fill="#3aa65a"/></svg><svg style="left:354.20px;top:40.60px" width="6.20" height="6.00" viewBox="0 0 6.20 6.00"><rect x="0.35" y="0.35" width="5.4" height="5.3" rx="0.5" fill="#e3edf8" stroke="#6f9bd6" stroke-width="0.6"/><rect x="1.6" y="0.4" width="2.9" height="1.9" fill="#fff" stroke="#6f9bd6" stroke-width="0.35"/><rect x="1.3" y="3.3" width="3.5" height="2.3" fill="#8fb4e3"/></svg><div class="sep" style="left:364.00px;top:40.30px;height:6.00px"></div><svg style="left:366.80px;top:40.50px" width="7.50" height="6.00" viewBox="0 0 7.50 6.00"><rect x="0.3" y="1.2" width="5.6" height="4.4" fill="#fff" stroke="#aab2bb" stroke-width="0.4"/><path d="M0.4 2.6h5.4M0.4 4h5.4M2.1 1.2v4.4" stroke="#c2c8cf" stroke-width="0.35"/><path d="M3.6 2.2h2.6" stroke="#3aa65a" stroke-width="0.8"/><path d="M5.8 1.2l1.5 1-1.5 1z" fill="#3aa65a"/></svg><div class="t" style="left:375.50px;top:42.49px;font-size:5.05px;color:#1a1a1a;font-weight:normal;">Import Dataset</div><svg style="left:411.60px;top:43.40px" width="3" height="2" viewBox="0 0 3 2"><path d="M0.4 0.3H2.6L1.5 1.7z" fill="#333"/></svg><div class="sep" style="left:417.00px;top:40.30px;height:6.00px"></div><svg style="left:420.40px;top:40.60px" width="6.00" height="6.00" viewBox="0 0 6.00 6.00"><circle cx="3" cy="3" r="2.6" fill="#e3e7eb" stroke="#c9cfd6" stroke-width="0.3"/><path d="M3 3L2.2 0.5A2.6 2.6 0 0 1 5.1 4.5z" fill="#3f8f6a"/></svg><div class="t" style="left:427.40px;top:42.50px;font-size:5.00px;color:#1a1a1a;font-weight:normal;">526 MiB</div><svg style="left:447.90px;top:43.40px" width="3" height="2" viewBox="0 0 3 2"><path d="M0.4 0.3H2.6L1.5 1.7z" fill="#333"/></svg><div class="sep" style="left:453.00px;top:40.30px;height:6.00px"></div><svg style="left:456.60px;top:40.00px" width="7.00" height="7.00" viewBox="0 0 7.00 7.00"><path d="M6.6 0.4L3.4 3.8" stroke="#9a6a2a" stroke-width="0.8"/><path d="M3.8 3.2L2.2 2.4 0.3 5.4 1.6 6.7 4.6 4.8z" fill="#e8b84a"/><path d="M1 5.2L3.2 3.6M1.8 6L4 4.3" stroke="#c48e2c" stroke-width="0.35"/></svg><svg style="left:659.00px;top:40.70px" width="4.50" height="5.50" viewBox="0 0 4.50 5.50"><rect x="0.3" y="0.3" width="3.8" height="4.8" fill="#e9ecef" stroke="#c6ccd3" stroke-width="0.4"/><path d="M0.5 1.8h3.4M0.5 3.2h3.4" stroke="#c6ccd3" stroke-width="0.4"/></svg><div class="t" style="left:664.70px;top:42.52px;font-size:4.90px;color:#222;font-weight:bold;">List</div><svg style="left:675.90px;top:43.40px" width="3" height="2" viewBox="0 0 3 2"><path d="M0.4 0.3H2.6L1.5 1.7z" fill="#333"/></svg><div class="sep" style="left:681.40px;top:40.30px;height:6.00px"></div><svg style="left:684.30px;top:40.50px" width="7.00" height="6.00" viewBox="0 0 7.00 6.00"><circle cx="3" cy="3" r="2.5" fill="none" stroke="#c9d2dc" stroke-width="0.9"/><path d="M3 0.5L5 0.5 4 1.8z" fill="#c9d2dc"/></svg><svg style="left:693.20px;top:43.40px" width="3" height="2" viewBox="0 0 3 2"><path d="M0.4 0.3H2.6L1.5 1.7z" fill="#333"/></svg><div class="t" style="left:344.40px;top:51.42px;font-size:4.90px;color:#333;font-weight:normal;">R</div><svg style="left:349.70px;top:52.30px" width="3" height="2" viewBox="0 0 3 2"><path d="M0.4 0.3H2.6L1.5 1.7z" fill="#333"/></svg><div class="sep" style="left:356.00px;top:49.00px;height:6.00px"></div><svg style="left:358.60px;top:49.00px" width="7.50" height="7.00" viewBox="0 0 7.50 7.00"><path d="M3.6 0.4L6.8 2.2V5.4L3.6 6.8 0.4 5.4V2.2z" fill="#9fc87a"/><path d="M3.6 0.4L6.8 2.2 3.6 3.8 0.4 2.2z" fill="#b58ee0"/><path d="M3.6 3.8L6.8 2.2V5.4L3.6 6.8z" fill="#6b8fe0"/></svg><div class="t" style="left:368.00px;top:51.39px;font-size:5.05px;color:#1a1a1a;font-weight:normal;">Global Environment</div><svg style="left:413.90px;top:52.30px" width="3" height="2" viewBox="0 0 3 2"><path d="M0.4 0.3H2.6L1.5 1.7z" fill="#333"/></svg><div class="a" style="left:642.80px;top:49.60px;width:50.00px;height:7.40px;background:#fff;border:0.5px solid #e3e6e9;border-radius:1px"></div><svg style="left:645.00px;top:50.30px" width="4.50" height="4.50" viewBox="0 0 4.50 4.50"><circle cx="1.8" cy="1.8" r="1.35" fill="none" stroke="#aab1b9" stroke-width="0.5"/><path d="M2.8 2.8L4 4" stroke="#aab1b9" stroke-width="0.6"/></svg><div class="t" style="left:343.50px;top:61.98px;font-size:5.10px;color:#333;font-weight:normal;font-family:'Liberation Mono',monospace;letter-spacing:-0.20px;">Data</div><svg style="left:343.60px;top:70.20px" width="4.40" height="4.40" viewBox="0 0 4.40 4.40"><circle cx="2.2" cy="2.2" r="2" fill="#6d9ed6"/><path d="M1.6 1.2L2.8 2.2 1.6 3.2" stroke="#fff" stroke-width="0.55" fill="none"/></svg><div class="t" style="left:349.80px;top:71.48px;font-size:5.10px;color:#333;font-weight:normal;font-family:'Liberation Mono',monospace;letter-spacing:-0.20px;">a1</div><div class="t" style="left:439.70px;top:71.48px;font-size:5.10px;color:#333;font-weight:normal;font-family:'Liberation Mono',monospace;letter-spacing:-0.09px;">4 obs. of 2 variables</div><div class="a" style="left:340.60px;top:76.00px;width:356.00px;height:0.50px;background:#edf0f2"></div><svg style="left:683.00px;top:69.00px" width="6.20" height="5.60" viewBox="0 0 6.20 5.60"><rect x="0.3" y="0.4" width="5.6" height="4.9" fill="#f6f8fa" stroke="#cdd3da" stroke-width="0.45"/><rect x="0.3" y="0.4" width="5.6" height="1.0" fill="#b9d3ea"/><path d="M0.4 3.1H5.8M3.1 1.4V5.2" stroke="#dfe3e8" stroke-width="0.35"/></svg><svg style="left:343.60px;top:78.50px" width="4.40" height="4.40" viewBox="0 0 4.40 4.40"><circle cx="2.2" cy="2.2" r="2" fill="#6d9ed6"/><path d="M1.6 1.2L2.8 2.2 1.6 3.2" stroke="#fff" stroke-width="0.55" fill="none"/></svg><div class="t" style="left:349.80px;top:79.78px;font-size:5.10px;color:#333;font-weight:normal;font-family:'Liberation Mono',monospace;letter-spacing:-0.20px;">data</div><div class="t" style="left:439.70px;top:79.78px;font-size:5.10px;color:#333;font-weight:normal;font-family:'Liberation Mono',monospace;letter-spacing:-0.09px;">234 obs. of 11 variables</div><div class="a" style="left:340.60px;top:84.50px;width:356.00px;height:0.50px;background:#edf0f2"></div><svg style="left:683.00px;top:77.30px" width="6.20" height="5.60" viewBox="0 0 6.20 5.60"><rect x="0.3" y="0.4" width="5.6" height="4.9" fill="#f6f8fa" stroke="#cdd3da" stroke-width="0.45"/><rect x="0.3" y="0.4" width="5.6" height="1.0" fill="#b9d3ea"/><path d="M0.4 3.1H5.8M3.1 1.4V5.2" stroke="#dfe3e8" stroke-width="0.35"/></svg><svg style="left:343.60px;top:86.90px" width="4.40" height="4.40" viewBox="0 0 4.40 4.40"><circle cx="2.2" cy="2.2" r="2" fill="#6d9ed6"/><path d="M1.6 1.2L2.8 2.2 1.6 3.2" stroke="#fff" stroke-width="0.55" fill="none"/></svg><div class="t" style="left:349.80px;top:88.18px;font-size:5.10px;color:#333;font-weight:normal;font-family:'Liberation Mono',monospace;letter-spacing:-0.20px;">mapping</div><div class="t" style="left:439.70px;top:88.18px;font-size:5.10px;color:#333;font-weight:normal;font-family:'Liberation Mono',monospace;letter-spacing:-0.09px;">List of  2</div><div class="a" style="left:340.60px;top:93.00px;width:356.00px;height:0.50px;background:#edf0f2"></div><svg style="left:683.50px;top:86.50px" width="5.00" height="5.00" viewBox="0 0 5.00 5.00"><circle cx="2" cy="2" r="1.5" fill="none" stroke="#666" stroke-width="0.6"/><path d="M3.1 3.1L4.5 4.5" stroke="#666" stroke-width="0.8"/></svg><div class="a" style="left:438.50px;top:67.50px;width:0.50px;height:25.60px;background:#edf0f2"></div><div class="a" style="left:359.50px;top:205.90px;width:18.60px;height:9.80px;background:#f2f5f7;border-radius:2px 2px 0 0"></div><div class="a" style="left:405.20px;top:206.40px;width:0.60px;height:9.30px;background:#f1f2f4"></div><div class="a" style="left:426.40px;top:206.40px;width:0.60px;height:9.30px;background:#f1f2f4"></div><div class="a" style="left:449.40px;top:206.40px;width:0.60px;height:9.30px;background:#f1f2f4"></div><div class="t" style="left:344.60px;top:210.03px;font-size:4.85px;color:#222;font-weight:bold;letter-spacing:-0.05px;">Files</div><div class="t" style="left:363.00px;top:210.03px;font-size:4.85px;color:#222;font-weight:bold;letter-spacing:-0.05px;">Plots</div><div class="t" style="left:382.00px;top:210.03px;font-size:4.85px;color:#222;font-weight:bold;letter-spacing:-0.05px;">Packages</div><div class="t" style="left:411.50px;top:210.03px;font-size:4.85px;color:#222;font-weight:bold;letter-spacing:-0.05px;">Help</div><div class="t" style="left:430.00px;top:210.03px;font-size:4.85px;color:#222;font-weight:bold;letter-spacing:-0.05px;">Viewer</div><div class="t" style="left:453.60px;top:210.03px;font-size:4.85px;color:#222;font-weight:bold;letter-spacing:-0.05px;">Presentation</div><svg style="left:679.00px;top:208.90px" width="14.00" height="7.00" viewBox="0 0 14.00 7.00"><rect x="0.3" y="3.1" width="5.6" height="2.1" fill="#f4f5f7" stroke="#9aa0a7" stroke-width="0.55"/><rect x="0.3" y="3.1" width="5.6" height="0.7" fill="#9aa0a7"/><rect x="8.2" y="0.3" width="5.2" height="5.5" fill="#f4f5f7" stroke="#9aa0a7" stroke-width="0.55"/><rect x="8.2" y="0.3" width="5.2" height="1.1" fill="#9aa0a7"/></svg><svg style="left:343.80px;top:218.90px" width="17.00" height="5.00" viewBox="0 0 17.00 5.00"><path d="M0.4 2.5L2.9 0.2V1.2H5.4Q6.4 1.2 6.4 2.5Q6.4 3.8 5.4 3.8H2.9V4.8z" fill="#a8cdef"/><path d="M16.2 2.5L13.7 0.2V1.2H11.2Q10.2 1.2 10.2 2.5Q10.2 3.8 11.2 3.8H13.7V4.8z" fill="#d8e7f6"/></svg><div class="sep" style="left:363.20px;top:217.20px;height:6.50px"></div><svg style="left:367.00px;top:217.80px" width="6.00" height="6.00" viewBox="0 0 6.00 6.00"><circle cx="3.7" cy="2.2" r="1.7" fill="#a8e0c8" stroke="#3c6d8f" stroke-width="0.6"/><path d="M2.6 3.3L0.6 5.4" stroke="#b0742a" stroke-width="0.9"/></svg><div class="t" style="left:375.50px;top:219.92px;font-size:4.90px;color:#333;font-weight:normal;">Zoom</div><div class="sep" style="left:392.70px;top:217.20px;height:6.50px"></div><svg style="left:395.80px;top:217.90px" width="6.50" height="5.50" viewBox="0 0 6.50 5.50"><rect x="0.5" y="0.8" width="5.5" height="4.3" fill="#fff" stroke="#6f8fc6" stroke-width="0.5"/><path d="M1 4.5l1.8-2 1.3 1.2 1.5-1.6" stroke="#e7a93a" stroke-width="0.6" fill="none"/><rect x="0.5" y="0.8" width="2.5" height="1.4" fill="#6f8fc6"/></svg><div class="t" style="left:403.80px;top:219.92px;font-size:4.90px;color:#333;font-weight:normal;">Export</div><svg style="left:420.90px;top:220.80px" width="3" height="2" viewBox="0 0 3 2"><path d="M0.4 0.3H2.6L1.5 1.7z" fill="#333"/></svg><div class="sep" style="left:426.80px;top:217.20px;height:6.50px"></div><svg style="left:429.60px;top:218.20px" width="5.00" height="5.00" viewBox="0 0 5.00 5.00"><circle cx="2.5" cy="2.5" r="2.2" fill="#d63a3a"/><path d="M1.6 1.6L3.4 3.4M3.4 1.6L1.6 3.4" stroke="#fff" stroke-width="0.7"/></svg><div class="sep" style="left:439.00px;top:217.20px;height:6.50px"></div><svg style="left:443.00px;top:217.60px" width="6.50" height="6.00" viewBox="0 0 6.50 6.00"><path d="M1 5.2L4.8 1.2" stroke="#b07a2e" stroke-width="0.7"/><path d="M0.4 3.6L2.6 5.6 1.2 6 0 5z" fill="#e9b63f"/></svg><svg style="left:651.00px;top:218.20px" width="7.00" height="5.00" viewBox="0 0 7.00 5.00"><path d="M0.5 2.8C1.5 0.5 2.5 0.5 3.5 2.5S5.5 4.5 6.5 2.2" stroke="#4a8fd6" stroke-width="1" fill="none"/><circle cx="1.4" cy="3.6" r="0.8" fill="#4a8fd6"/><circle cx="5.6" cy="1.3" r="0.8" fill="#4a8fd6"/></svg><div class="t" style="left:659.60px;top:219.92px;font-size:4.90px;color:#222;font-weight:normal;">Publish</div><svg style="left:679.60px;top:220.80px" width="3" height="2" viewBox="0 0 3 2"><path d="M0.4 0.3H2.6L1.5 1.7z" fill="#333"/></svg><div class="sep" style="left:685.00px;top:217.20px;height:6.50px"></div><svg style="left:687.60px;top:218.00px" width="6.00" height="6.00" viewBox="0 0 6.00 6.00"><circle cx="3" cy="3" r="2.5" fill="none" stroke="#c9d2dc" stroke-width="0.9"/></svg></div></body></html>
